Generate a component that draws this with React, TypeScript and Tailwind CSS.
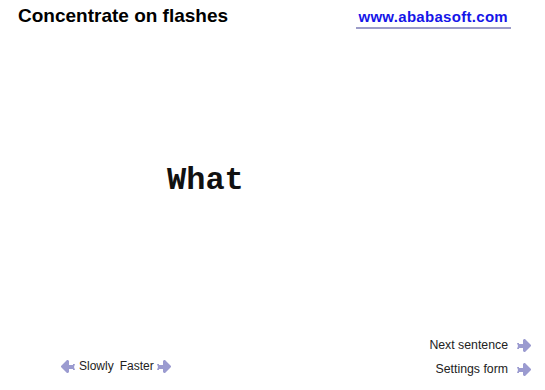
import React from "react";

function ArrowRight({ flip = false }: { flip?: boolean }) {
  return (
    <svg
      width="14"
      height="13"
      viewBox="0 0 14 13"
      style={flip ? { transform: "scaleX(-1)" } : undefined}
      className="shrink-0"
    >
      <path
        d="M0 4 L2 4 L2 5 L6 5 L6 1 L7 0 L8 0 L14 6 L14 7 L8 13 L7 13 L6 12 L6 9 L2 9 L2 10 L0 10 L1 7 Z"
        fill="#9b9bd0"
      />
    </svg>
  );
}

export default function App() {
  return (
    <div
      className="w-[545px] h-[390px] bg-white relative flex flex-col overflow-hidden"
      style={{ fontFamily: '"Liberation Sans", Arial, sans-serif' }}
    >
      <div className="flex items-start justify-between pl-[18px] pr-[34px] pt-[5px]">
        <div className="text-[19px] font-bold text-black leading-[22px]">Concentrate on flashes</div>
        <div className="flex flex-col items-center pt-[4px]">
          <a className="text-[15px] font-bold text-[#1515e8] leading-[16px] px-[3px] tracking-[0.3px]">www.ababasoft.com</a>
          <div className="w-[155px] h-[2px] bg-[#9c9cc8] mt-[2px]" />
        </div>
      </div>
      <div className="flex-1 flex items-center pl-[167px] pt-[4px] pb-[10px]">
        <div
          className="text-[32px] font-bold text-[#111] leading-none"
          style={{ fontFamily: '"Liberation Mono", "Courier New", monospace' }}
        >
          What
        </div>
      </div>
      <div className="flex items-end justify-between pl-[61px] pr-[14px] pb-[14px]">
        <div className="flex items-center gap-[3px] text-[12px] text-[#222] leading-[14px] mb-[3px]">
          <ArrowRight flip />
          <span className="ml-[1px]">Slowly</span>
          <span className="ml-[3px]">Faster</span>
          <ArrowRight />
        </div>
        <div className="flex flex-col items-end gap-[10px] text-[12.3px] text-[#222] leading-[14px]">
          <div className="flex items-center gap-[9px] h-[14px]">
            <span>Next sentence</span>
            <ArrowRight />
          </div>
          <div className="flex items-center gap-[9px] h-[14px]">
            <span>Settings form</span>
            <ArrowRight />
          </div>
        </div>
      </div>
    </div>
  );
}
